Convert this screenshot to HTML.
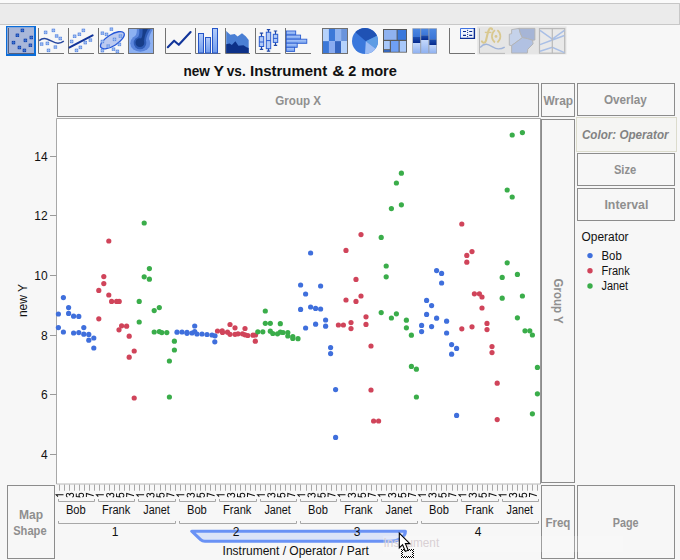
<!DOCTYPE html><html><head><meta charset="utf-8"><title>Graph Builder</title>
<style>html,body{margin:0;padding:0;background:#f7f7f7;overflow:hidden}svg{display:block}text{font-family:"Liberation Sans",sans-serif}</style></head><body>
<svg width="680" height="560" viewBox="0 0 680 560">
<rect width="680" height="560" fill="#f7f7f7"/>
<rect x="0" y="0" width="680" height="3" fill="#fafafa"/>
<rect x="0" y="3" width="680" height="21" fill="#ebebeb"/>
<rect x="0" y="3" width="680" height="1" fill="#c6c6c6"/>
<rect x="0" y="24" width="680" height="1" fill="#c8c8c8"/>
<rect x="679" y="3" width="1" height="22" fill="#c8c8c8"/>
<defs><linearGradient id="gb" x1="0" y1="0" x2="0" y2="1"><stop offset="0" stop-color="#b4cdfb"/><stop offset="1" stop-color="#6f9bec"/></linearGradient><linearGradient id="gh" x1="0" y1="0" x2="0" y2="1"><stop offset="0" stop-color="#b2ccfa"/><stop offset="1" stop-color="#74a0ee"/></linearGradient><linearGradient id="gl" x1="0" y1="0" x2="0" y2="1"><stop offset="0" stop-color="#c4d8fb"/><stop offset="1" stop-color="#8fb1f0"/></linearGradient><linearGradient id="gm" x1="0" y1="0" x2="0" y2="1"><stop offset="0" stop-color="#4c88e2"/><stop offset="1" stop-color="#3a74d6"/></linearGradient><linearGradient id="gd" x1="0" y1="0" x2="0" y2="1"><stop offset="0" stop-color="#1d4eae"/><stop offset="1" stop-color="#062a8e"/></linearGradient><clipPath id="cc"><rect x="128.5" y="28.5" width="25" height="25"/></clipPath><clipPath id="cp"><circle cx="365" cy="41" r="13"/></clipPath></defs>
<rect x="6" y="26" width="30" height="30" fill="#0b6dd9"/>
<rect x="7.2" y="27.2" width="26.8" height="26.8" fill="#a9b7d9"/>
<path d="M8.5 28 V53.5 H34" fill="none" stroke="#56607e" stroke-width="1"/>
<rect x="20.7" y="28.7" width="3.4" height="3.4" fill="#1445ac"/>
<path d="M20.7 30.4 H24.1 M22.4 28.7 V32.1" stroke="#4475d2" stroke-width="0.7"/>
<rect x="15.7" y="33.6" width="3.4" height="3.4" fill="#1445ac"/>
<path d="M15.7 35.3 H19.1 M17.4 33.6 V37.0" stroke="#4475d2" stroke-width="0.7"/>
<rect x="29.6" y="35.8" width="3.4" height="3.4" fill="#1445ac"/>
<path d="M29.6 37.5 H33.0 M31.3 35.8 V39.2" stroke="#4475d2" stroke-width="0.7"/>
<rect x="23.7" y="38.7" width="3.4" height="3.4" fill="#1445ac"/>
<path d="M23.7 40.4 H27.1 M25.4 38.7 V42.1" stroke="#4475d2" stroke-width="0.7"/>
<rect x="11.8" y="40.9" width="3.4" height="3.4" fill="#1445ac"/>
<path d="M11.8 42.6 H15.2 M13.5 40.9 V44.3" stroke="#4475d2" stroke-width="0.7"/>
<rect x="28.7" y="43.6" width="3.4" height="3.4" fill="#1445ac"/>
<path d="M28.7 45.3 H32.1 M30.4 43.6 V47.0" stroke="#4475d2" stroke-width="0.7"/>
<rect x="17.7" y="45.8" width="3.4" height="3.4" fill="#1445ac"/>
<path d="M17.7 47.5 H21.1 M19.4 45.8 V49.2" stroke="#4475d2" stroke-width="0.7"/>
<rect x="22.7" y="48.7" width="3.4" height="3.4" fill="#1445ac"/>
<path d="M22.7 50.4 H26.1 M24.4 48.7 V52.1" stroke="#4475d2" stroke-width="0.7"/>
<path d="M38.5 28.0 V53.5 H64.0" fill="none" stroke="#727272" stroke-width="1"/>
<rect x="43.9" y="30.7" width="3.4" height="3.4" fill="#648fe2"/>
<path d="M43.9 32.4 H47.3 M45.6 30.7 V34.1" stroke="#a4c0f4" stroke-width="0.7"/>
<rect x="51.7" y="28.7" width="3.4" height="3.4" fill="#648fe2"/>
<path d="M51.7 30.4 H55.1 M53.4 28.7 V32.1" stroke="#a4c0f4" stroke-width="0.7"/>
<rect x="54.9" y="34.3" width="3.4" height="3.4" fill="#648fe2"/>
<path d="M54.9 36.0 H58.3 M56.6 34.3 V37.7" stroke="#a4c0f4" stroke-width="0.7"/>
<rect x="58.6" y="36.8" width="3.4" height="3.4" fill="#648fe2"/>
<path d="M58.6 38.5 H62.0 M60.3 36.8 V40.2" stroke="#a4c0f4" stroke-width="0.7"/>
<rect x="39.9" y="42.4" width="3.4" height="3.4" fill="#648fe2"/>
<path d="M39.9 44.1 H43.3 M41.6 42.4 V45.8" stroke="#a4c0f4" stroke-width="0.7"/>
<rect x="45.7" y="41.7" width="3.4" height="3.4" fill="#648fe2"/>
<path d="M45.7 43.4 H49.1 M47.4 41.7 V45.1" stroke="#a4c0f4" stroke-width="0.7"/>
<rect x="53.7" y="45.4" width="3.4" height="3.4" fill="#648fe2"/>
<path d="M53.7 47.1 H57.1 M55.4 45.4 V48.8" stroke="#a4c0f4" stroke-width="0.7"/>
<rect x="46.8" y="48.7" width="3.4" height="3.4" fill="#648fe2"/>
<path d="M46.8 50.4 H50.2 M48.5 48.7 V52.1" stroke="#a4c0f4" stroke-width="0.7"/>
<path d="M39.2 40.6 C41.5 38.6 44.5 38 47.5 39.2 C51.5 40.8 54.5 43.2 58 43.2 C60.5 43.2 62.4 42.3 63.8 41.2" fill="none" stroke="#27479f" stroke-width="1.5"/>
<path d="M68.5 28.0 V53.5 H94.0" fill="none" stroke="#727272" stroke-width="1"/>
<rect x="81.7" y="28.7" width="3.4" height="3.4" fill="#648fe2"/>
<path d="M81.7 30.4 H85.1 M83.4 28.7 V32.1" stroke="#a4c0f4" stroke-width="0.7"/>
<rect x="77.7" y="32.6" width="3.4" height="3.4" fill="#648fe2"/>
<path d="M77.7 34.3 H81.1 M79.4 32.6 V36.0" stroke="#a4c0f4" stroke-width="0.7"/>
<rect x="72.9" y="34.6" width="3.4" height="3.4" fill="#648fe2"/>
<path d="M72.9 36.3 H76.3 M74.6 34.6 V38.0" stroke="#a4c0f4" stroke-width="0.7"/>
<rect x="69.9" y="39.8" width="3.4" height="3.4" fill="#648fe2"/>
<path d="M69.9 41.5 H73.3 M71.6 39.8 V43.2" stroke="#a4c0f4" stroke-width="0.7"/>
<rect x="88.7" y="38.4" width="3.4" height="3.4" fill="#648fe2"/>
<path d="M88.7 40.1 H92.1 M90.4 38.4 V41.8" stroke="#a4c0f4" stroke-width="0.7"/>
<rect x="83.6" y="40.9" width="3.4" height="3.4" fill="#648fe2"/>
<path d="M83.6 42.6 H87.0 M85.3 40.9 V44.3" stroke="#a4c0f4" stroke-width="0.7"/>
<rect x="78.7" y="45.7" width="3.4" height="3.4" fill="#648fe2"/>
<path d="M78.7 47.4 H82.1 M80.4 45.7 V49.1" stroke="#a4c0f4" stroke-width="0.7"/>
<rect x="74.8" y="48.7" width="3.4" height="3.4" fill="#648fe2"/>
<path d="M74.8 50.4 H78.2 M76.5 48.7 V52.1" stroke="#a4c0f4" stroke-width="0.7"/>
<path d="M69.6 47.4 L92.6 35.4" stroke="#12359a" stroke-width="2.1" stroke-linecap="round"/>
<path d="M98.5 28.0 V53.5 H124.0" fill="none" stroke="#727272" stroke-width="1"/>
<ellipse cx="112.4" cy="40.2" rx="13.6" ry="5.6" transform="rotate(-32 112.4 40.2)" fill="#bccaf0" stroke="#2557d8" stroke-width="1.3"/>
<rect x="109.7" y="27.5" width="3.4" height="3.4" fill="#648fe2"/>
<path d="M109.7 29.2 H113.1 M111.4 27.5 V30.9" stroke="#a4c0f4" stroke-width="0.7"/>
<rect x="100.7" y="31.5" width="3.4" height="3.4" fill="#648fe2"/>
<path d="M100.7 33.2 H104.1 M102.4 31.5 V34.9" stroke="#a4c0f4" stroke-width="0.7"/>
<rect x="104.8" y="32.7" width="3.4" height="3.4" fill="#648fe2"/>
<path d="M104.8 34.4 H108.2 M106.5 32.7 V36.1" stroke="#a4c0f4" stroke-width="0.7"/>
<rect x="118.7" y="34.4" width="3.4" height="3.4" fill="#648fe2"/>
<path d="M118.7 36.1 H122.1 M120.4 34.4 V37.8" stroke="#a4c0f4" stroke-width="0.7"/>
<rect x="112.8" y="37.7" width="3.4" height="3.4" fill="#648fe2"/>
<path d="M112.8 39.4 H116.2 M114.5 37.7 V41.1" stroke="#a4c0f4" stroke-width="0.7"/>
<rect x="100.7" y="39.8" width="3.4" height="3.4" fill="#648fe2"/>
<path d="M100.7 41.5 H104.1 M102.4 39.8 V43.2" stroke="#a4c0f4" stroke-width="0.7"/>
<rect x="117.7" y="42.7" width="3.4" height="3.4" fill="#648fe2"/>
<path d="M117.7 44.4 H121.1 M119.4 42.7 V46.1" stroke="#a4c0f4" stroke-width="0.7"/>
<rect x="106.5" y="44.4" width="3.4" height="3.4" fill="#648fe2"/>
<path d="M106.5 46.1 H109.9 M108.2 44.4 V47.8" stroke="#a4c0f4" stroke-width="0.7"/>
<rect x="111.8" y="47.5" width="3.4" height="3.4" fill="#648fe2"/>
<path d="M111.8 49.2 H115.2 M113.5 47.5 V50.9" stroke="#a4c0f4" stroke-width="0.7"/>
<rect x="100.7" y="48.9" width="3.4" height="3.4" fill="#648fe2"/>
<path d="M100.7 50.6 H104.1 M102.4 48.9 V52.3" stroke="#a4c0f4" stroke-width="0.7"/>
<rect x="115.7" y="49.7" width="3.4" height="3.4" fill="#648fe2"/>
<path d="M115.7 51.4 H119.1 M117.4 49.7 V53.1" stroke="#a4c0f4" stroke-width="0.7"/>
<rect x="128.5" y="28.5" width="25" height="25" fill="#8db1f2"/>
<g clip-path="url(#cc)">
<ellipse cx="140.3" cy="43.2" rx="10" ry="8.5" fill="#5a85dc"/><path d="M136.4 27 C137.6 32 136.4 35.5 133.6 38 L149 41 C148.4 37.5 150.6 33 154 27 Z" fill="#5a85dc"/>
<circle cx="140" cy="43" r="6.3" fill="#2f5cb6"/><path d="M138.8 27 C139.8 32.5 139.4 36 137 38.4 L146 41.5 C146 38 147.4 33.5 152 27 Z" fill="#2f5cb6"/>
<circle cx="139.9" cy="42.7" r="4.4" fill="#173d88"/><path d="M142.5 27 C142.7 33 142.6 36 141 38.8 L144.2 41.2 C144.3 38 145 33.5 149 27 Z" fill="#173d88"/>
</g>
<rect x="128.5" y="28.5" width="25" height="25" fill="none" stroke="#707070" stroke-width="1"/>
<path d="M165.5 28.0 V53.5 H191.0" fill="none" stroke="#727272" stroke-width="1"/>
<path d="M167.8 47.2 L174.1 40.7 L178.8 44.8 L190.6 32" fill="none" stroke="#12359a" stroke-width="2.1" stroke-linecap="round" stroke-linejoin="round"/>
<path d="M195.5 28.0 V53.5 H220.5" fill="none" stroke="#727272" stroke-width="1"/>
<rect x="198.5" y="33.5" width="5.0" height="19.5" fill="url(#gb)" stroke="#2555c8" stroke-width="1"/>
<rect x="205.5" y="37.5" width="5.0" height="15.5" fill="url(#gb)" stroke="#2555c8" stroke-width="1"/>
<rect x="212.5" y="28.5" width="5.0" height="24.5" fill="url(#gb)" stroke="#2555c8" stroke-width="1"/>
<path d="M225.5 28.0 V53.5 H250.0" fill="none" stroke="#727272" stroke-width="1"/>
<path d="M226.2 31 L230.3 34.7 L234.7 34 L237.6 36.5 L242 33.2 L245.7 36.2 L248.7 39.9 V53 H226.2 Z" fill="#4a7fd4"/>
<path d="M226.2 44.3 L229.6 43.5 L231.8 45 L235.4 41.3 L238.4 45.7 L243.5 45.3 L246.5 47.2 L248.7 47.9 V53 H226.2 Z" fill="#0d3188"/>
<path d="M255.5 28.0 V53.5 H280.5" fill="none" stroke="#727272" stroke-width="1"/>
<path d="M261.5 33.2 V49.4 M259.8 33.2 H263.2 M259.8 49.4 H263.2" stroke="#1d46a8" stroke-width="1.2" fill="none"/>
<rect x="259.3" y="36.6" width="4.4" height="9.9" fill="#b0caf8" stroke="#2a5cd0" stroke-width="1"/>
<path d="M259.3 42.0 H263.7" stroke="#2a5cd0" stroke-width="1"/>
<path d="M268.5 29.6 V51.2 M266.8 29.6 H270.2 M266.8 51.2 H270.2" stroke="#1d46a8" stroke-width="1.2" fill="none"/>
<rect x="266.3" y="32.2" width="4.4" height="16.5" fill="#b0caf8" stroke="#2a5cd0" stroke-width="1"/>
<path d="M266.3 40.6 H270.7" stroke="#2a5cd0" stroke-width="1"/>
<path d="M275.5 31.0 V45.3 M273.8 31.0 H277.2 M273.8 45.3 H277.2" stroke="#1d46a8" stroke-width="1.2" fill="none"/>
<rect x="273.3" y="34.3" width="4.4" height="8.1" fill="#b0caf8" stroke="#2a5cd0" stroke-width="1"/>
<path d="M273.3 38.4 H277.7" stroke="#2a5cd0" stroke-width="1"/>
<path d="M285.5 28.0 V53.5 H311.0" fill="none" stroke="#727272" stroke-width="1"/>
<rect x="286.3" y="31.0" width="9.4" height="4.1" fill="url(#gh)" stroke="#2a5cd0" stroke-width="0.9"/>
<rect x="286.3" y="35.1" width="14.3" height="4.1" fill="url(#gh)" stroke="#2a5cd0" stroke-width="0.9"/>
<rect x="286.3" y="39.2" width="20.5" height="4.1" fill="url(#gh)" stroke="#2a5cd0" stroke-width="0.9"/>
<rect x="286.3" y="43.2" width="10.9" height="4.1" fill="url(#gh)" stroke="#2a5cd0" stroke-width="0.9"/>
<rect x="286.3" y="47.3" width="8.3" height="4.1" fill="url(#gh)" stroke="#2a5cd0" stroke-width="0.9"/>
<rect x="322.8" y="28.7" width="6.2" height="12.6" fill="#b5d2fc"/>
<rect x="328.9" y="28.7" width="6.2" height="12.6" fill="#3b78d8"/>
<rect x="335.0" y="28.7" width="6.2" height="12.6" fill="#8fb3f0"/>
<rect x="341.1" y="28.7" width="6.2" height="12.6" fill="#6a94dc"/>
<rect x="322.8" y="41.1" width="6.2" height="12.6" fill="#3b78d8"/>
<rect x="328.9" y="41.1" width="6.2" height="12.6" fill="#8aacf0"/>
<rect x="335.0" y="41.1" width="6.2" height="12.6" fill="#3565c0"/>
<rect x="341.1" y="41.1" width="6.2" height="12.6" fill="#b5d2fc"/>
<rect x="322.5" y="28.5" width="25" height="25" fill="none" stroke="#707070" stroke-width="1"/>
<g clip-path="url(#cp)"><rect x="350" y="26" width="30" height="30" fill="#3a78dc"/><path d="M365.8 41.2 L351 28.4 L352 20 L385 20 L382.3 33.1 Z" fill="#1f52b4"/><path d="M365.8 41.2 L382.3 33.1 L386 45 L382.4 53.8 Z" fill="#5d9ce4"/><path d="M365.8 41.2 L382.4 53.8 L375 60 L364.6 60 Z" fill="#9cbdf5"/></g>
<rect x="383" y="29" width="24" height="23.6" fill="#595959"/>
<rect x="384.0" y="30.0" width="12.6" height="9.8" fill="#8fb2f0"/>
<rect x="397.6" y="30.0" width="8.5" height="9.8" fill="#3a78dc"/>
<rect x="384.0" y="41.0" width="5.8" height="8.2" fill="#a8c8fa"/>
<rect x="384.0" y="50.2" width="5.8" height="1.6" fill="#2f6bd6"/>
<rect x="390.9" y="41.0" width="7.7" height="10.8" fill="#6fa0f4"/>
<rect x="399.7" y="41.0" width="6.4" height="10.8" fill="#a8c8fa"/>
<rect x="412.3" y="28.3" width="24.7" height="25.4" fill="#9aa0aa"/>
<rect x="413.0" y="28.8" width="7.2" height="8.2" fill="url(#gm)"/>
<rect x="413.0" y="37.0" width="7.2" height="6.0" fill="url(#gd)"/>
<rect x="413.0" y="43.0" width="7.2" height="10.2" fill="url(#gl)"/>
<rect x="421.2" y="28.8" width="7.2" height="6.7" fill="url(#gm)"/>
<rect x="421.2" y="35.5" width="7.2" height="4.5" fill="url(#gd)"/>
<rect x="421.2" y="40.0" width="7.2" height="13.2" fill="url(#gl)"/>
<rect x="429.4" y="28.8" width="6.9" height="10.7" fill="url(#gm)"/>
<rect x="429.4" y="39.5" width="6.9" height="5.5" fill="url(#gd)"/>
<rect x="429.4" y="45.0" width="6.9" height="8.2" fill="url(#gl)"/>
<path d="M449.5 28.0 V53.5 H475.0" fill="none" stroke="#727272" stroke-width="1"/>
<rect x="460.5" y="28.5" width="14" height="10" fill="#eef3fd"/>
<path d="M460.5 39 V28.5 H475" fill="none" stroke="#3f72e2" stroke-width="1"/>
<path d="M460 38.4 H474.4 V28" fill="none" stroke="#0b2c92" stroke-width="1.4"/>
<path d="M463 31.5 H466 M469.2 31.5 H472.2 M463 35.4 H466 M469.2 35.4 H472.2" stroke="#0b2c92" stroke-width="1.2"/>
<circle cx="467.6" cy="30.3" r="0.6" fill="#0b2c92"/>
<circle cx="467.6" cy="32.5" r="0.6" fill="#0b2c92"/>
<circle cx="467.6" cy="34.5" r="0.6" fill="#0b2c92"/>
<circle cx="467.6" cy="36.6" r="0.6" fill="#0b2c92"/>
<rect x="477.2" y="26.4" width="89.3" height="28" fill="#e5e5e5"/>
<path d="M479.5 28.4 V53.4 H505" fill="none" stroke="#b8b8b8" stroke-width="1"/>
<path d="M492.2 29.3 C491.6 28 490.4 27.9 489.6 28.7 C488.4 29.9 488 32 487.4 34.6 L486 40.6 C485.6 42.2 484.6 42.9 483.6 42.7 C482.8 42.5 482.2 42 481.9 41.4" fill="none" stroke="#d9c88f" stroke-width="2.1" stroke-linecap="round"/>
<path d="M484.8 32.4 H491.4" stroke="#d9c88f" stroke-width="1.4"/>
<path d="M494.9 30.1 C490.9 33.5 490.9 39 494.9 42.5 M497.4 30.1 C501.4 33.5 501.4 39 497.4 42.5" fill="none" stroke="#d9c88f" stroke-width="1.7"/>
<circle cx="496" cy="36.4" r="1.4" fill="#d9c88f"/>
<path d="M480.1 47.4 C482 45.4 484 44.2 486.3 44.3 C490.5 44.5 494 48.9 498.3 48.9 C500.8 48.9 503 48.2 504.7 47.1" fill="none" stroke="#a1b4d9" stroke-width="1.4"/>
<path d="M511.6 29.6 L519.0 28.4 L520.3 33.2 L522.4 37.6 L511.6 45.6 L509.3 45.2 L509.3 34.2 L511.6 33.7 Z" fill="#c5d2ea" stroke="#b2b2b2" stroke-width="0.9" stroke-linejoin="round"/>
<path d="M519.0 28.4 L534.9 28.4 L534.9 40.0 L532.6 40.3 L527.3 38.6 L522.4 37.6 L520.3 33.2 Z" fill="#a6b5d6" stroke="#b2b2b2" stroke-width="0.9" stroke-linejoin="round"/>
<path d="M522.4 37.6 L527.3 38.6 L532.6 40.3 L533.1 43.9 L527.8 49.2 L527.3 53.1 L511.6 53.1 L511.6 45.6 Z" fill="#b1c1e2" stroke="#b2b2b2" stroke-width="0.9" stroke-linejoin="round"/>
<rect x="539.5" y="28.6" width="25.2" height="24.6" fill="#e9e9e9" stroke="#b9b9b9" stroke-width="1.2"/>
<path d="M540 30.3 L552.3 39 L564.4 30.3 M540 44.6 L552.3 40 L564.4 35.5 M540 51.2 L552.3 47.3 L564.4 52.6" fill="none" stroke="#a9bfe6" stroke-width="1.5"/>
<path d="M552.3 28.6 V53.2" stroke="#b9b9b9" stroke-width="1.2"/>
<text x="183.4" y="75.9" font-size="14.2" font-weight="bold" fill="#111" textLength="26.4" lengthAdjust="spacingAndGlyphs">new</text>
<text x="213.6" y="75.9" font-size="14.2" font-weight="bold" fill="#111" textLength="10.5" lengthAdjust="spacingAndGlyphs">Y</text>
<text x="226.7" y="75.9" font-size="14.2" font-weight="bold" fill="#111" textLength="19.0" lengthAdjust="spacingAndGlyphs">vs.</text>
<text x="250.0" y="75.9" font-size="14.2" font-weight="bold" fill="#111" textLength="77.2" lengthAdjust="spacingAndGlyphs">Instrument</text>
<text x="332.3" y="75.9" font-size="14.2" font-weight="bold" fill="#111" textLength="12.3" lengthAdjust="spacingAndGlyphs">&amp;</text>
<text x="348.2" y="75.9" font-size="14.2" font-weight="bold" fill="#111" textLength="8.0" lengthAdjust="spacingAndGlyphs">2</text>
<text x="361.2" y="75.9" font-size="14.2" font-weight="bold" fill="#111" textLength="35.7" lengthAdjust="spacingAndGlyphs">more</text>
<rect x="57.5" y="83.5" width="481.0" height="33.0" fill="none" stroke="#8c8c8c" stroke-width="1"/>
<text x="275.3" y="104.6" font-size="12.2" font-weight="bold" fill="#8f8f8f" textLength="45.8" lengthAdjust="spacingAndGlyphs" >Group X</text>
<rect x="541.5" y="83.5" width="33.0" height="33.0" fill="none" stroke="#8c8c8c" stroke-width="1"/>
<text x="543.4" y="104.6" font-size="12.2" font-weight="bold" fill="#8f8f8f" textLength="29.7" lengthAdjust="spacingAndGlyphs" >Wrap</text>
<rect x="577.5" y="83.5" width="97.0" height="32.0" fill="none" stroke="#8c8c8c" stroke-width="1"/>
<text x="603.9" y="104.0" font-size="12.2" font-weight="bold" fill="#8f8f8f" textLength="43.0" lengthAdjust="spacingAndGlyphs" >Overlay</text>
<rect x="576.5" y="117.5" width="100.0" height="34.0" fill="#f5f5f3" stroke="#dcdccd" stroke-width="1"/>
<text x="581.9" y="138.9" font-size="12.2" font-weight="bold" fill="#828282" textLength="86.7" lengthAdjust="spacingAndGlyphs" font-style="italic">Color: Operator</text>
<rect x="577.5" y="153.5" width="97.0" height="32.0" fill="none" stroke="#8c8c8c" stroke-width="1"/>
<text x="613.9" y="173.9" font-size="12.2" font-weight="bold" fill="#8f8f8f" textLength="22.4" lengthAdjust="spacingAndGlyphs" >Size</text>
<rect x="577.5" y="188.5" width="97.0" height="32.0" fill="none" stroke="#8c8c8c" stroke-width="1"/>
<text x="604.4" y="208.8" font-size="12.2" font-weight="bold" fill="#8f8f8f" textLength="44.0" lengthAdjust="spacingAndGlyphs" >Interval</text>
<rect x="541.5" y="119.5" width="33.0" height="363.0" fill="none" stroke="#8c8c8c" stroke-width="1"/>
<text transform="translate(553.6,278.6) rotate(90)" font-size="12.2" font-weight="bold" fill="#8f8f8f" textLength="45" lengthAdjust="spacingAndGlyphs">Group Y</text>
<rect x="7.5" y="485.5" width="47.0" height="73.0" fill="none" stroke="#8c8c8c" stroke-width="1"/>
<text x="19.0" y="518.6" font-size="12.2" font-weight="bold" fill="#8f8f8f" textLength="24.1" lengthAdjust="spacingAndGlyphs" >Map</text>
<text x="13.2" y="534.7" font-size="12.2" font-weight="bold" fill="#8f8f8f" textLength="33.4" lengthAdjust="spacingAndGlyphs" >Shape</text>
<rect x="541.5" y="485.5" width="33.0" height="73.0" fill="none" stroke="#8c8c8c" stroke-width="1"/>
<text x="545.4" y="527.0" font-size="12.2" font-weight="bold" fill="#8f8f8f" textLength="25.0" lengthAdjust="spacingAndGlyphs" >Freq</text>
<rect x="577.5" y="485.5" width="97.0" height="73.0" fill="none" stroke="#8c8c8c" stroke-width="1"/>
<text x="612.7" y="527.0" font-size="12.2" font-weight="bold" fill="#8f8f8f" textLength="25.8" lengthAdjust="spacingAndGlyphs" >Page</text>
<rect x="57" y="118.5" width="483.5" height="365.5" fill="#fff"/>
<path d="M56.5 484 V118.5 H540.5" fill="none" stroke="#a8a8a8" stroke-width="1"/>
<path d="M56.5 484 H540.5" fill="none" stroke="#b8b8b8" stroke-width="1"/>
<path d="M540.5 118.5 V484" fill="none" stroke="#9a9a9a" stroke-width="1"/>
<path d="M50 156.5 H56.5" stroke="#9a9a9a" stroke-width="1"/>
<text x="47.6" y="160.8" font-size="12" fill="#111" text-anchor="end">14</text>
<path d="M50 215.5 H56.5" stroke="#9a9a9a" stroke-width="1"/>
<text x="47.6" y="220.3" font-size="12" fill="#111" text-anchor="end">12</text>
<path d="M50 275.5 H56.5" stroke="#9a9a9a" stroke-width="1"/>
<text x="47.6" y="279.9" font-size="12" fill="#111" text-anchor="end">10</text>
<path d="M50 335.5 H56.5" stroke="#9a9a9a" stroke-width="1"/>
<text x="47.6" y="339.8" font-size="12" fill="#111" text-anchor="end">8</text>
<path d="M50 394.5 H56.5" stroke="#9a9a9a" stroke-width="1"/>
<text x="47.6" y="399.0" font-size="12" fill="#111" text-anchor="end">6</text>
<path d="M50 454.5 H56.5" stroke="#9a9a9a" stroke-width="1"/>
<text x="47.6" y="458.6" font-size="12" fill="#111" text-anchor="end">4</text>
<text transform="translate(26.6,300.5) rotate(-90)" font-size="12" fill="#111" text-anchor="middle">new Y</text>
<defs><g id="d1" fill="none" stroke="#111" stroke-width="1.05"><path d="M2.6 0 V-7.8 L0.7 -5.9"/></g><g id="d3" fill="none" stroke="#111" stroke-width="1.05"><path d="M0.4 -6.6 C0.9 -7.5 1.6 -7.8 2.2 -7.8 C3.3 -7.8 3.9 -7 3.9 -6 C3.9 -4.9 3.1 -4.2 1.8 -4.2 C3.3 -4.2 4.1 -3.4 4.1 -2.2 C4.1 -0.9 3.2 0 2.1 0 C1.3 0 0.6 -0.4 0.2 -1.2"/></g><g id="d5" fill="none" stroke="#111" stroke-width="1.05"><path d="M3.8 -7.8 H0.9 L0.6 -4.3 C1.1 -4.7 1.7 -4.9 2.3 -4.9 C3.4 -4.9 4.1 -3.9 4.1 -2.5 C4.1 -1 3.3 0 2.1 0 C1.3 0 0.6 -0.4 0.3 -1.2"/></g><g id="d7" fill="none" stroke="#111" stroke-width="1.05"><path d="M0.3 -7.8 H4 L1.6 0"/></g></defs>
<path d="M59.5 484.5 V490.7" stroke="#a8a8a8" stroke-width="1"/>
<use href="#d1" transform="translate(63.5,497.4) rotate(-90) scale(1,0.94)"/>
<path d="M64.5 484.5 V490.7" stroke="#a8a8a8" stroke-width="1"/>
<path d="M69.5 484.5 V490.7" stroke="#a8a8a8" stroke-width="1"/>
<use href="#d3" transform="translate(73.6,497.4) rotate(-90) scale(1,0.94)"/>
<path d="M74.5 484.5 V490.7" stroke="#a8a8a8" stroke-width="1"/>
<path d="M79.5 484.5 V490.7" stroke="#a8a8a8" stroke-width="1"/>
<use href="#d5" transform="translate(83.6,497.4) rotate(-90) scale(1,0.94)"/>
<path d="M84.5 484.5 V490.7" stroke="#a8a8a8" stroke-width="1"/>
<path d="M89.5 484.5 V490.7" stroke="#a8a8a8" stroke-width="1"/>
<use href="#d7" transform="translate(93.7,497.4) rotate(-90) scale(1,0.94)"/>
<path d="M94.5 484.5 V490.7" stroke="#a8a8a8" stroke-width="1"/>
<path d="M99.5 484.5 V490.7" stroke="#a8a8a8" stroke-width="1"/>
<use href="#d1" transform="translate(103.8,497.4) rotate(-90) scale(1,0.94)"/>
<path d="M104.5 484.5 V490.7" stroke="#a8a8a8" stroke-width="1"/>
<path d="M109.5 484.5 V490.7" stroke="#a8a8a8" stroke-width="1"/>
<use href="#d3" transform="translate(113.9,497.4) rotate(-90) scale(1,0.94)"/>
<path d="M114.5 484.5 V490.7" stroke="#a8a8a8" stroke-width="1"/>
<path d="M119.5 484.5 V490.7" stroke="#a8a8a8" stroke-width="1"/>
<use href="#d5" transform="translate(123.9,497.4) rotate(-90) scale(1,0.94)"/>
<path d="M124.5 484.5 V490.7" stroke="#a8a8a8" stroke-width="1"/>
<path d="M129.5 484.5 V490.7" stroke="#a8a8a8" stroke-width="1"/>
<use href="#d7" transform="translate(134.0,497.4) rotate(-90) scale(1,0.94)"/>
<path d="M134.5 484.5 V490.7" stroke="#a8a8a8" stroke-width="1"/>
<path d="M139.5 484.5 V490.7" stroke="#a8a8a8" stroke-width="1"/>
<use href="#d1" transform="translate(144.1,497.4) rotate(-90) scale(1,0.94)"/>
<path d="M144.5 484.5 V490.7" stroke="#a8a8a8" stroke-width="1"/>
<path d="M149.5 484.5 V490.7" stroke="#a8a8a8" stroke-width="1"/>
<use href="#d3" transform="translate(154.1,497.4) rotate(-90) scale(1,0.94)"/>
<path d="M154.5 484.5 V490.7" stroke="#a8a8a8" stroke-width="1"/>
<path d="M160.5 484.5 V490.7" stroke="#a8a8a8" stroke-width="1"/>
<use href="#d5" transform="translate(164.2,497.4) rotate(-90) scale(1,0.94)"/>
<path d="M165.5 484.5 V490.7" stroke="#a8a8a8" stroke-width="1"/>
<path d="M170.5 484.5 V490.7" stroke="#a8a8a8" stroke-width="1"/>
<use href="#d7" transform="translate(174.3,497.4) rotate(-90) scale(1,0.94)"/>
<path d="M175.5 484.5 V490.7" stroke="#a8a8a8" stroke-width="1"/>
<path d="M180.5 484.5 V490.7" stroke="#a8a8a8" stroke-width="1"/>
<use href="#d1" transform="translate(184.3,497.4) rotate(-90) scale(1,0.94)"/>
<path d="M185.5 484.5 V490.7" stroke="#a8a8a8" stroke-width="1"/>
<path d="M190.5 484.5 V490.7" stroke="#a8a8a8" stroke-width="1"/>
<use href="#d3" transform="translate(194.4,497.4) rotate(-90) scale(1,0.94)"/>
<path d="M195.5 484.5 V490.7" stroke="#a8a8a8" stroke-width="1"/>
<path d="M200.5 484.5 V490.7" stroke="#a8a8a8" stroke-width="1"/>
<use href="#d5" transform="translate(204.5,497.4) rotate(-90) scale(1,0.94)"/>
<path d="M205.5 484.5 V490.7" stroke="#a8a8a8" stroke-width="1"/>
<path d="M210.5 484.5 V490.7" stroke="#a8a8a8" stroke-width="1"/>
<use href="#d7" transform="translate(214.6,497.4) rotate(-90) scale(1,0.94)"/>
<path d="M215.5 484.5 V490.7" stroke="#a8a8a8" stroke-width="1"/>
<path d="M220.5 484.5 V490.7" stroke="#a8a8a8" stroke-width="1"/>
<use href="#d1" transform="translate(224.6,497.4) rotate(-90) scale(1,0.94)"/>
<path d="M225.5 484.5 V490.7" stroke="#a8a8a8" stroke-width="1"/>
<path d="M230.5 484.5 V490.7" stroke="#a8a8a8" stroke-width="1"/>
<use href="#d3" transform="translate(234.7,497.4) rotate(-90) scale(1,0.94)"/>
<path d="M235.5 484.5 V490.7" stroke="#a8a8a8" stroke-width="1"/>
<path d="M240.5 484.5 V490.7" stroke="#a8a8a8" stroke-width="1"/>
<use href="#d5" transform="translate(244.8,497.4) rotate(-90) scale(1,0.94)"/>
<path d="M245.5 484.5 V490.7" stroke="#a8a8a8" stroke-width="1"/>
<path d="M250.5 484.5 V490.7" stroke="#a8a8a8" stroke-width="1"/>
<use href="#d7" transform="translate(254.8,497.4) rotate(-90) scale(1,0.94)"/>
<path d="M255.5 484.5 V490.7" stroke="#a8a8a8" stroke-width="1"/>
<path d="M260.5 484.5 V490.7" stroke="#a8a8a8" stroke-width="1"/>
<use href="#d1" transform="translate(264.9,497.4) rotate(-90) scale(1,0.94)"/>
<path d="M265.5 484.5 V490.7" stroke="#a8a8a8" stroke-width="1"/>
<path d="M270.5 484.5 V490.7" stroke="#a8a8a8" stroke-width="1"/>
<use href="#d3" transform="translate(275.0,497.4) rotate(-90) scale(1,0.94)"/>
<path d="M275.5 484.5 V490.7" stroke="#a8a8a8" stroke-width="1"/>
<path d="M280.5 484.5 V490.7" stroke="#a8a8a8" stroke-width="1"/>
<use href="#d5" transform="translate(285.0,497.4) rotate(-90) scale(1,0.94)"/>
<path d="M285.5 484.5 V490.7" stroke="#a8a8a8" stroke-width="1"/>
<path d="M290.5 484.5 V490.7" stroke="#a8a8a8" stroke-width="1"/>
<use href="#d7" transform="translate(295.1,497.4) rotate(-90) scale(1,0.94)"/>
<path d="M295.5 484.5 V490.7" stroke="#a8a8a8" stroke-width="1"/>
<path d="M300.5 484.5 V490.7" stroke="#a8a8a8" stroke-width="1"/>
<use href="#d1" transform="translate(305.2,497.4) rotate(-90) scale(1,0.94)"/>
<path d="M306.5 484.5 V490.7" stroke="#a8a8a8" stroke-width="1"/>
<path d="M311.5 484.5 V490.7" stroke="#a8a8a8" stroke-width="1"/>
<use href="#d3" transform="translate(315.2,497.4) rotate(-90) scale(1,0.94)"/>
<path d="M316.5 484.5 V490.7" stroke="#a8a8a8" stroke-width="1"/>
<path d="M321.5 484.5 V490.7" stroke="#a8a8a8" stroke-width="1"/>
<use href="#d5" transform="translate(325.3,497.4) rotate(-90) scale(1,0.94)"/>
<path d="M326.5 484.5 V490.7" stroke="#a8a8a8" stroke-width="1"/>
<path d="M331.5 484.5 V490.7" stroke="#a8a8a8" stroke-width="1"/>
<use href="#d7" transform="translate(335.4,497.4) rotate(-90) scale(1,0.94)"/>
<path d="M336.5 484.5 V490.7" stroke="#a8a8a8" stroke-width="1"/>
<path d="M341.5 484.5 V490.7" stroke="#a8a8a8" stroke-width="1"/>
<use href="#d1" transform="translate(345.5,497.4) rotate(-90) scale(1,0.94)"/>
<path d="M346.5 484.5 V490.7" stroke="#a8a8a8" stroke-width="1"/>
<path d="M351.5 484.5 V490.7" stroke="#a8a8a8" stroke-width="1"/>
<use href="#d3" transform="translate(355.5,497.4) rotate(-90) scale(1,0.94)"/>
<path d="M356.5 484.5 V490.7" stroke="#a8a8a8" stroke-width="1"/>
<path d="M361.5 484.5 V490.7" stroke="#a8a8a8" stroke-width="1"/>
<use href="#d5" transform="translate(365.6,497.4) rotate(-90) scale(1,0.94)"/>
<path d="M366.5 484.5 V490.7" stroke="#a8a8a8" stroke-width="1"/>
<path d="M371.5 484.5 V490.7" stroke="#a8a8a8" stroke-width="1"/>
<use href="#d7" transform="translate(375.7,497.4) rotate(-90) scale(1,0.94)"/>
<path d="M376.5 484.5 V490.7" stroke="#a8a8a8" stroke-width="1"/>
<path d="M381.5 484.5 V490.7" stroke="#a8a8a8" stroke-width="1"/>
<use href="#d1" transform="translate(385.7,497.4) rotate(-90) scale(1,0.94)"/>
<path d="M386.5 484.5 V490.7" stroke="#a8a8a8" stroke-width="1"/>
<path d="M391.5 484.5 V490.7" stroke="#a8a8a8" stroke-width="1"/>
<use href="#d3" transform="translate(395.8,497.4) rotate(-90) scale(1,0.94)"/>
<path d="M396.5 484.5 V490.7" stroke="#a8a8a8" stroke-width="1"/>
<path d="M401.5 484.5 V490.7" stroke="#a8a8a8" stroke-width="1"/>
<use href="#d5" transform="translate(405.9,497.4) rotate(-90) scale(1,0.94)"/>
<path d="M406.5 484.5 V490.7" stroke="#a8a8a8" stroke-width="1"/>
<path d="M411.5 484.5 V490.7" stroke="#a8a8a8" stroke-width="1"/>
<use href="#d7" transform="translate(415.9,497.4) rotate(-90) scale(1,0.94)"/>
<path d="M416.5 484.5 V490.7" stroke="#a8a8a8" stroke-width="1"/>
<path d="M421.5 484.5 V490.7" stroke="#a8a8a8" stroke-width="1"/>
<use href="#d1" transform="translate(426.0,497.4) rotate(-90) scale(1,0.94)"/>
<path d="M426.5 484.5 V490.7" stroke="#a8a8a8" stroke-width="1"/>
<path d="M431.5 484.5 V490.7" stroke="#a8a8a8" stroke-width="1"/>
<use href="#d3" transform="translate(436.1,497.4) rotate(-90) scale(1,0.94)"/>
<path d="M436.5 484.5 V490.7" stroke="#a8a8a8" stroke-width="1"/>
<path d="M441.5 484.5 V490.7" stroke="#a8a8a8" stroke-width="1"/>
<use href="#d5" transform="translate(446.2,497.4) rotate(-90) scale(1,0.94)"/>
<path d="M446.5 484.5 V490.7" stroke="#a8a8a8" stroke-width="1"/>
<path d="M452.5 484.5 V490.7" stroke="#a8a8a8" stroke-width="1"/>
<use href="#d7" transform="translate(456.2,497.4) rotate(-90) scale(1,0.94)"/>
<path d="M457.5 484.5 V490.7" stroke="#a8a8a8" stroke-width="1"/>
<path d="M462.5 484.5 V490.7" stroke="#a8a8a8" stroke-width="1"/>
<use href="#d1" transform="translate(466.3,497.4) rotate(-90) scale(1,0.94)"/>
<path d="M467.5 484.5 V490.7" stroke="#a8a8a8" stroke-width="1"/>
<path d="M472.5 484.5 V490.7" stroke="#a8a8a8" stroke-width="1"/>
<use href="#d3" transform="translate(476.4,497.4) rotate(-90) scale(1,0.94)"/>
<path d="M477.5 484.5 V490.7" stroke="#a8a8a8" stroke-width="1"/>
<path d="M482.5 484.5 V490.7" stroke="#a8a8a8" stroke-width="1"/>
<use href="#d5" transform="translate(486.4,497.4) rotate(-90) scale(1,0.94)"/>
<path d="M487.5 484.5 V490.7" stroke="#a8a8a8" stroke-width="1"/>
<path d="M492.5 484.5 V490.7" stroke="#a8a8a8" stroke-width="1"/>
<use href="#d7" transform="translate(496.5,497.4) rotate(-90) scale(1,0.94)"/>
<path d="M497.5 484.5 V490.7" stroke="#a8a8a8" stroke-width="1"/>
<path d="M502.5 484.5 V490.7" stroke="#a8a8a8" stroke-width="1"/>
<use href="#d1" transform="translate(506.6,497.4) rotate(-90) scale(1,0.94)"/>
<path d="M507.5 484.5 V490.7" stroke="#a8a8a8" stroke-width="1"/>
<path d="M512.5 484.5 V490.7" stroke="#a8a8a8" stroke-width="1"/>
<use href="#d3" transform="translate(516.7,497.4) rotate(-90) scale(1,0.94)"/>
<path d="M517.5 484.5 V490.7" stroke="#a8a8a8" stroke-width="1"/>
<path d="M522.5 484.5 V490.7" stroke="#a8a8a8" stroke-width="1"/>
<use href="#d5" transform="translate(526.7,497.4) rotate(-90) scale(1,0.94)"/>
<path d="M527.5 484.5 V490.7" stroke="#a8a8a8" stroke-width="1"/>
<path d="M532.5 484.5 V490.7" stroke="#a8a8a8" stroke-width="1"/>
<use href="#d7" transform="translate(536.8,497.4) rotate(-90) scale(1,0.94)"/>
<path d="M537.5 484.5 V490.7" stroke="#a8a8a8" stroke-width="1"/>
<path d="M58.5 499 V501.5 H94.5 V499" fill="none" stroke="#a8a8a8" stroke-width="1"/>
<text x="65.9" y="513.8" font-size="12" fill="#111" textLength="19.8" lengthAdjust="spacingAndGlyphs">Bob</text>
<path d="M98.5 499 V501.5 H134.5 V499" fill="none" stroke="#a8a8a8" stroke-width="1"/>
<text x="102.0" y="513.8" font-size="12" fill="#111" textLength="28.3" lengthAdjust="spacingAndGlyphs">Frank</text>
<path d="M138.5 499 V501.5 H175.5 V499" fill="none" stroke="#a8a8a8" stroke-width="1"/>
<text x="143.3" y="513.8" font-size="12" fill="#111" textLength="26.4" lengthAdjust="spacingAndGlyphs">Janet</text>
<path d="M179.5 499 V501.5 H215.5 V499" fill="none" stroke="#a8a8a8" stroke-width="1"/>
<text x="187.0" y="513.8" font-size="12" fill="#111" textLength="19.8" lengthAdjust="spacingAndGlyphs">Bob</text>
<path d="M219.5 499 V501.5 H256.5 V499" fill="none" stroke="#a8a8a8" stroke-width="1"/>
<text x="223.1" y="513.8" font-size="12" fill="#111" textLength="28.3" lengthAdjust="spacingAndGlyphs">Frank</text>
<path d="M260.5 499 V501.5 H296.5 V499" fill="none" stroke="#a8a8a8" stroke-width="1"/>
<text x="264.4" y="513.8" font-size="12" fill="#111" textLength="26.4" lengthAdjust="spacingAndGlyphs">Janet</text>
<path d="M300.5 499 V501.5 H336.5 V499" fill="none" stroke="#a8a8a8" stroke-width="1"/>
<text x="308.1" y="513.8" font-size="12" fill="#111" textLength="19.8" lengthAdjust="spacingAndGlyphs">Bob</text>
<path d="M340.5 499 V501.5 H377.5 V499" fill="none" stroke="#a8a8a8" stroke-width="1"/>
<text x="344.2" y="513.8" font-size="12" fill="#111" textLength="28.3" lengthAdjust="spacingAndGlyphs">Frank</text>
<path d="M381.5 499 V501.5 H417.5 V499" fill="none" stroke="#a8a8a8" stroke-width="1"/>
<text x="385.5" y="513.8" font-size="12" fill="#111" textLength="26.4" lengthAdjust="spacingAndGlyphs">Janet</text>
<path d="M421.5 499 V501.5 H457.5 V499" fill="none" stroke="#a8a8a8" stroke-width="1"/>
<text x="429.1" y="513.8" font-size="12" fill="#111" textLength="19.8" lengthAdjust="spacingAndGlyphs">Bob</text>
<path d="M461.5 499 V501.5 H498.5 V499" fill="none" stroke="#a8a8a8" stroke-width="1"/>
<text x="465.2" y="513.8" font-size="12" fill="#111" textLength="28.3" lengthAdjust="spacingAndGlyphs">Frank</text>
<path d="M502.5 499 V501.5 H538.5 V499" fill="none" stroke="#a8a8a8" stroke-width="1"/>
<text x="506.6" y="513.8" font-size="12" fill="#111" textLength="26.4" lengthAdjust="spacingAndGlyphs">Janet</text>
<path d="M58.5 521 V523.5 H175.5 V521" fill="none" stroke="#a8a8a8" stroke-width="1"/>
<path d="M179.5 521 V523.5 H296.5 V521" fill="none" stroke="#a8a8a8" stroke-width="1"/>
<path d="M300.5 521 V523.5 H417.5 V521" fill="none" stroke="#a8a8a8" stroke-width="1"/>
<path d="M421.5 521 V523.5 H538.5 V521" fill="none" stroke="#a8a8a8" stroke-width="1"/>
<path d="M191.7 531.2 L200.6 539.6 Q202.4 541.3 204.8 541.3 L390.4 541.3 A15 10.1 0 0 0 405.4 531.2 Z" fill="#dce4f8" stroke="#6a92f5" stroke-width="3.1" stroke-linejoin="round" stroke-linecap="round"/>
<text x="115.0" y="535.8" font-size="12" fill="#111" text-anchor="middle">1</text>
<text x="236.0" y="535.8" font-size="12" fill="#111" text-anchor="middle">2</text>
<text x="357.1" y="535.8" font-size="12" fill="#111" text-anchor="middle">3</text>
<text x="478.2" y="535.8" font-size="12" fill="#111" text-anchor="middle">4</text>
<text x="222.6" y="554.6" font-size="12" fill="#111" textLength="146.2" lengthAdjust="spacingAndGlyphs">Instrument / Operator / Part</text>
<circle cx="58.4" cy="314.0" r="2.6" fill="#3f6fdc"/>
<circle cx="58.4" cy="327.6" r="2.6" fill="#3f6fdc"/>
<circle cx="63.4" cy="297.6" r="2.6" fill="#3f6fdc"/>
<circle cx="63.4" cy="332.0" r="2.6" fill="#3f6fdc"/>
<circle cx="68.6" cy="307.6" r="2.6" fill="#3f6fdc"/>
<circle cx="68.6" cy="313.4" r="2.6" fill="#3f6fdc"/>
<circle cx="73.6" cy="316.2" r="2.6" fill="#3f6fdc"/>
<circle cx="73.6" cy="333.0" r="2.6" fill="#3f6fdc"/>
<circle cx="78.8" cy="316.4" r="2.6" fill="#3f6fdc"/>
<circle cx="78.8" cy="332.6" r="2.6" fill="#3f6fdc"/>
<circle cx="83.8" cy="327.6" r="2.6" fill="#3f6fdc"/>
<circle cx="83.8" cy="334.2" r="2.6" fill="#3f6fdc"/>
<circle cx="88.8" cy="334.4" r="2.6" fill="#3f6fdc"/>
<circle cx="88.8" cy="340.2" r="2.6" fill="#3f6fdc"/>
<circle cx="93.8" cy="338.0" r="2.6" fill="#3f6fdc"/>
<circle cx="93.8" cy="348.0" r="2.6" fill="#3f6fdc"/>
<circle cx="177.0" cy="332.2" r="2.6" fill="#3f6fdc"/>
<circle cx="182.0" cy="332.0" r="2.6" fill="#3f6fdc"/>
<circle cx="187.0" cy="332.3" r="2.6" fill="#3f6fdc"/>
<circle cx="187.0" cy="333.3" r="2.6" fill="#3f6fdc"/>
<circle cx="192.0" cy="333.0" r="2.6" fill="#3f6fdc"/>
<circle cx="194.7" cy="326.0" r="2.6" fill="#3f6fdc"/>
<circle cx="194.7" cy="331.5" r="2.6" fill="#3f6fdc"/>
<circle cx="197.0" cy="334.0" r="2.6" fill="#3f6fdc"/>
<circle cx="202.0" cy="334.0" r="2.6" fill="#3f6fdc"/>
<circle cx="207.0" cy="334.5" r="2.6" fill="#3f6fdc"/>
<circle cx="212.0" cy="335.0" r="2.6" fill="#3f6fdc"/>
<circle cx="215.0" cy="335.8" r="2.6" fill="#3f6fdc"/>
<circle cx="214.8" cy="341.8" r="2.6" fill="#3f6fdc"/>
<circle cx="300.6" cy="285.0" r="2.6" fill="#3f6fdc"/>
<circle cx="300.6" cy="309.4" r="2.6" fill="#3f6fdc"/>
<circle cx="305.6" cy="294.0" r="2.6" fill="#3f6fdc"/>
<circle cx="305.6" cy="328.0" r="2.6" fill="#3f6fdc"/>
<circle cx="310.6" cy="253.0" r="2.6" fill="#3f6fdc"/>
<circle cx="310.6" cy="307.0" r="2.6" fill="#3f6fdc"/>
<circle cx="315.6" cy="308.4" r="2.6" fill="#3f6fdc"/>
<circle cx="315.6" cy="324.2" r="2.6" fill="#3f6fdc"/>
<circle cx="320.6" cy="286.0" r="2.6" fill="#3f6fdc"/>
<circle cx="320.6" cy="309.0" r="2.6" fill="#3f6fdc"/>
<circle cx="325.6" cy="320.0" r="2.6" fill="#3f6fdc"/>
<circle cx="325.6" cy="326.2" r="2.6" fill="#3f6fdc"/>
<circle cx="330.6" cy="347.6" r="2.6" fill="#3f6fdc"/>
<circle cx="330.6" cy="353.6" r="2.6" fill="#3f6fdc"/>
<circle cx="335.6" cy="389.6" r="2.6" fill="#3f6fdc"/>
<circle cx="335.6" cy="437.4" r="2.6" fill="#3f6fdc"/>
<circle cx="421.6" cy="325.4" r="2.6" fill="#3f6fdc"/>
<circle cx="421.6" cy="331.6" r="2.6" fill="#3f6fdc"/>
<circle cx="426.6" cy="300.4" r="2.6" fill="#3f6fdc"/>
<circle cx="426.6" cy="314.4" r="2.6" fill="#3f6fdc"/>
<circle cx="431.6" cy="305.6" r="2.6" fill="#3f6fdc"/>
<circle cx="431.6" cy="326.6" r="2.6" fill="#3f6fdc"/>
<circle cx="436.6" cy="270.6" r="2.6" fill="#3f6fdc"/>
<circle cx="436.6" cy="318.2" r="2.6" fill="#3f6fdc"/>
<circle cx="441.6" cy="273.4" r="2.6" fill="#3f6fdc"/>
<circle cx="441.6" cy="283.0" r="2.6" fill="#3f6fdc"/>
<circle cx="446.6" cy="321.2" r="2.6" fill="#3f6fdc"/>
<circle cx="446.6" cy="333.0" r="2.6" fill="#3f6fdc"/>
<circle cx="451.6" cy="344.6" r="2.6" fill="#3f6fdc"/>
<circle cx="451.6" cy="354.2" r="2.6" fill="#3f6fdc"/>
<circle cx="456.6" cy="348.4" r="2.6" fill="#3f6fdc"/>
<circle cx="456.6" cy="415.4" r="2.6" fill="#3f6fdc"/>
<circle cx="98.8" cy="290.4" r="2.6" fill="#d0445a"/>
<circle cx="98.8" cy="318.8" r="2.6" fill="#d0445a"/>
<circle cx="103.8" cy="276.6" r="2.6" fill="#d0445a"/>
<circle cx="103.8" cy="283.6" r="2.6" fill="#d0445a"/>
<circle cx="108.8" cy="241.0" r="2.6" fill="#d0445a"/>
<circle cx="108.8" cy="295.0" r="2.6" fill="#d0445a"/>
<circle cx="111.6" cy="301.4" r="2.6" fill="#d0445a"/>
<circle cx="116.6" cy="301.4" r="2.6" fill="#d0445a"/>
<circle cx="119.2" cy="301.4" r="2.6" fill="#d0445a"/>
<circle cx="121.6" cy="325.8" r="2.6" fill="#d0445a"/>
<circle cx="126.6" cy="326.2" r="2.6" fill="#d0445a"/>
<circle cx="119.0" cy="329.8" r="2.6" fill="#d0445a"/>
<circle cx="129.2" cy="336.2" r="2.6" fill="#d0445a"/>
<circle cx="129.2" cy="357.2" r="2.6" fill="#d0445a"/>
<circle cx="134.2" cy="351.0" r="2.6" fill="#d0445a"/>
<circle cx="134.2" cy="398.0" r="2.6" fill="#d0445a"/>
<circle cx="217.5" cy="331.0" r="2.6" fill="#d0445a"/>
<circle cx="222.2" cy="330.8" r="2.6" fill="#d0445a"/>
<circle cx="222.5" cy="332.5" r="2.6" fill="#d0445a"/>
<circle cx="227.5" cy="332.2" r="2.6" fill="#d0445a"/>
<circle cx="230.0" cy="324.5" r="2.6" fill="#d0445a"/>
<circle cx="230.0" cy="334.3" r="2.6" fill="#d0445a"/>
<circle cx="235.0" cy="327.8" r="2.6" fill="#d0445a"/>
<circle cx="235.0" cy="334.3" r="2.6" fill="#d0445a"/>
<circle cx="238.0" cy="333.8" r="2.6" fill="#d0445a"/>
<circle cx="242.5" cy="333.8" r="2.6" fill="#d0445a"/>
<circle cx="245.0" cy="328.5" r="2.6" fill="#d0445a"/>
<circle cx="245.0" cy="334.8" r="2.6" fill="#d0445a"/>
<circle cx="247.8" cy="335.5" r="2.6" fill="#d0445a"/>
<circle cx="253.0" cy="335.2" r="2.6" fill="#d0445a"/>
<circle cx="255.5" cy="335.0" r="2.6" fill="#d0445a"/>
<circle cx="255.3" cy="341.2" r="2.6" fill="#d0445a"/>
<circle cx="338.4" cy="325.0" r="2.6" fill="#d0445a"/>
<circle cx="343.4" cy="325.0" r="2.6" fill="#d0445a"/>
<circle cx="346.0" cy="250.4" r="2.6" fill="#d0445a"/>
<circle cx="346.0" cy="300.0" r="2.6" fill="#d0445a"/>
<circle cx="351.0" cy="322.6" r="2.6" fill="#d0445a"/>
<circle cx="351.0" cy="328.6" r="2.6" fill="#d0445a"/>
<circle cx="356.0" cy="279.4" r="2.6" fill="#d0445a"/>
<circle cx="356.0" cy="301.4" r="2.6" fill="#d0445a"/>
<circle cx="361.0" cy="234.6" r="2.6" fill="#d0445a"/>
<circle cx="361.0" cy="296.0" r="2.6" fill="#d0445a"/>
<circle cx="366.0" cy="316.8" r="2.6" fill="#d0445a"/>
<circle cx="366.0" cy="324.4" r="2.6" fill="#d0445a"/>
<circle cx="371.0" cy="346.0" r="2.6" fill="#d0445a"/>
<circle cx="371.0" cy="390.0" r="2.6" fill="#d0445a"/>
<circle cx="373.6" cy="421.0" r="2.6" fill="#d0445a"/>
<circle cx="378.6" cy="421.0" r="2.6" fill="#d0445a"/>
<circle cx="461.8" cy="328.8" r="2.6" fill="#d0445a"/>
<circle cx="461.8" cy="224.0" r="2.6" fill="#d0445a"/>
<circle cx="466.8" cy="255.4" r="2.6" fill="#d0445a"/>
<circle cx="466.8" cy="262.2" r="2.6" fill="#d0445a"/>
<circle cx="472.0" cy="251.6" r="2.6" fill="#d0445a"/>
<circle cx="472.0" cy="326.8" r="2.6" fill="#d0445a"/>
<circle cx="474.4" cy="293.8" r="2.6" fill="#d0445a"/>
<circle cx="479.4" cy="293.8" r="2.6" fill="#d0445a"/>
<circle cx="482.0" cy="297.0" r="2.6" fill="#d0445a"/>
<circle cx="482.0" cy="308.0" r="2.6" fill="#d0445a"/>
<circle cx="487.0" cy="323.4" r="2.6" fill="#d0445a"/>
<circle cx="487.0" cy="329.6" r="2.6" fill="#d0445a"/>
<circle cx="492.0" cy="346.6" r="2.6" fill="#d0445a"/>
<circle cx="492.0" cy="352.6" r="2.6" fill="#d0445a"/>
<circle cx="497.2" cy="383.2" r="2.6" fill="#d0445a"/>
<circle cx="497.2" cy="419.6" r="2.6" fill="#d0445a"/>
<circle cx="139.2" cy="301.4" r="2.6" fill="#3aad4a"/>
<circle cx="139.2" cy="322.0" r="2.6" fill="#3aad4a"/>
<circle cx="144.2" cy="223.0" r="2.6" fill="#3aad4a"/>
<circle cx="144.2" cy="276.8" r="2.6" fill="#3aad4a"/>
<circle cx="149.4" cy="268.6" r="2.6" fill="#3aad4a"/>
<circle cx="149.4" cy="279.2" r="2.6" fill="#3aad4a"/>
<circle cx="154.2" cy="310.6" r="2.6" fill="#3aad4a"/>
<circle cx="154.2" cy="332.0" r="2.6" fill="#3aad4a"/>
<circle cx="159.3" cy="307.6" r="2.6" fill="#3aad4a"/>
<circle cx="159.3" cy="331.6" r="2.6" fill="#3aad4a"/>
<circle cx="161.8" cy="332.6" r="2.6" fill="#3aad4a"/>
<circle cx="166.8" cy="332.6" r="2.6" fill="#3aad4a"/>
<circle cx="169.4" cy="361.0" r="2.6" fill="#3aad4a"/>
<circle cx="169.4" cy="397.0" r="2.6" fill="#3aad4a"/>
<circle cx="174.4" cy="341.2" r="2.6" fill="#3aad4a"/>
<circle cx="174.4" cy="350.0" r="2.6" fill="#3aad4a"/>
<circle cx="257.8" cy="331.8" r="2.6" fill="#3aad4a"/>
<circle cx="262.8" cy="331.8" r="2.6" fill="#3aad4a"/>
<circle cx="265.3" cy="311.0" r="2.6" fill="#3aad4a"/>
<circle cx="265.3" cy="323.3" r="2.6" fill="#3aad4a"/>
<circle cx="270.3" cy="323.3" r="2.6" fill="#3aad4a"/>
<circle cx="270.3" cy="331.2" r="2.6" fill="#3aad4a"/>
<circle cx="272.8" cy="333.5" r="2.6" fill="#3aad4a"/>
<circle cx="277.5" cy="333.8" r="2.6" fill="#3aad4a"/>
<circle cx="280.3" cy="323.7" r="2.6" fill="#3aad4a"/>
<circle cx="280.3" cy="332.2" r="2.6" fill="#3aad4a"/>
<circle cx="283.0" cy="332.5" r="2.6" fill="#3aad4a"/>
<circle cx="287.8" cy="332.5" r="2.6" fill="#3aad4a"/>
<circle cx="287.8" cy="336.0" r="2.6" fill="#3aad4a"/>
<circle cx="292.8" cy="336.5" r="2.6" fill="#3aad4a"/>
<circle cx="292.8" cy="338.5" r="2.6" fill="#3aad4a"/>
<circle cx="298.0" cy="338.7" r="2.6" fill="#3aad4a"/>
<circle cx="381.2" cy="237.4" r="2.6" fill="#3aad4a"/>
<circle cx="381.2" cy="312.6" r="2.6" fill="#3aad4a"/>
<circle cx="386.2" cy="266.0" r="2.6" fill="#3aad4a"/>
<circle cx="386.2" cy="276.8" r="2.6" fill="#3aad4a"/>
<circle cx="391.4" cy="318.0" r="2.6" fill="#3aad4a"/>
<circle cx="391.4" cy="208.6" r="2.6" fill="#3aad4a"/>
<circle cx="396.4" cy="313.8" r="2.6" fill="#3aad4a"/>
<circle cx="396.4" cy="183.0" r="2.6" fill="#3aad4a"/>
<circle cx="401.4" cy="173.2" r="2.6" fill="#3aad4a"/>
<circle cx="401.4" cy="204.8" r="2.6" fill="#3aad4a"/>
<circle cx="406.4" cy="320.2" r="2.6" fill="#3aad4a"/>
<circle cx="406.4" cy="327.8" r="2.6" fill="#3aad4a"/>
<circle cx="411.4" cy="335.2" r="2.6" fill="#3aad4a"/>
<circle cx="411.4" cy="366.4" r="2.6" fill="#3aad4a"/>
<circle cx="416.4" cy="369.2" r="2.6" fill="#3aad4a"/>
<circle cx="416.4" cy="397.0" r="2.6" fill="#3aad4a"/>
<circle cx="502.2" cy="277.4" r="2.6" fill="#3aad4a"/>
<circle cx="502.2" cy="298.2" r="2.6" fill="#3aad4a"/>
<circle cx="507.2" cy="262.8" r="2.6" fill="#3aad4a"/>
<circle cx="507.2" cy="190.0" r="2.6" fill="#3aad4a"/>
<circle cx="512.2" cy="135.0" r="2.6" fill="#3aad4a"/>
<circle cx="512.2" cy="197.0" r="2.6" fill="#3aad4a"/>
<circle cx="517.4" cy="274.4" r="2.6" fill="#3aad4a"/>
<circle cx="517.4" cy="317.8" r="2.6" fill="#3aad4a"/>
<circle cx="522.4" cy="296.0" r="2.6" fill="#3aad4a"/>
<circle cx="522.4" cy="132.6" r="2.6" fill="#3aad4a"/>
<circle cx="525.0" cy="330.8" r="2.6" fill="#3aad4a"/>
<circle cx="529.8" cy="330.8" r="2.6" fill="#3aad4a"/>
<circle cx="532.4" cy="335.0" r="2.6" fill="#3aad4a"/>
<circle cx="532.4" cy="413.8" r="2.6" fill="#3aad4a"/>
<circle cx="537.4" cy="367.4" r="2.6" fill="#3aad4a"/>
<circle cx="537.4" cy="393.8" r="2.6" fill="#3aad4a"/>
<text x="581.6" y="241.2" font-size="12" fill="#111" textLength="47" lengthAdjust="spacingAndGlyphs">Operator</text>
<circle cx="590" cy="255.6" r="2.7" fill="#3f6fdc"/>
<text x="601.5" y="259.5" font-size="12" fill="#111" textLength="20.2" lengthAdjust="spacingAndGlyphs">Bob</text>
<circle cx="590" cy="270.8" r="2.7" fill="#d0445a"/>
<text x="601.5" y="274.7" font-size="12" fill="#111" textLength="28.3" lengthAdjust="spacingAndGlyphs">Frank</text>
<circle cx="590" cy="286.0" r="2.7" fill="#3aad4a"/>
<text x="601.5" y="289.9" font-size="12" fill="#111" textLength="26.6" lengthAdjust="spacingAndGlyphs">Janet</text>
<rect x="383" y="536" width="240" height="16" fill="#fff" opacity="0.17"/>
<text x="383.6" y="546.8" font-size="12" fill="#d9d0d4" textLength="55.6" lengthAdjust="spacingAndGlyphs">Instrument</text>
<g><rect x="401" y="549" width="13" height="9" fill="#fff"/><rect x="403" y="551" width="9" height="5" fill="#f1f1f1"/><path d="M401 549h1v1h-1zM403 549h1v1h-1zM405 549h1v1h-1zM407 549h1v1h-1zM409 549h1v1h-1zM411 549h1v1h-1zM413 549h1v1h-1zM402 550h1v1h-1zM404 550h1v1h-1zM406 550h1v1h-1zM408 550h1v1h-1zM410 550h1v1h-1zM412 550h1v1h-1zM401 551h1v1h-1zM413 551h1v1h-1zM402 552h1v1h-1zM412 552h1v1h-1zM401 553h1v1h-1zM413 553h1v1h-1zM402 554h1v1h-1zM412 554h1v1h-1zM401 555h1v1h-1zM413 555h1v1h-1zM402 556h1v1h-1zM404 556h1v1h-1zM406 556h1v1h-1zM408 556h1v1h-1zM410 556h1v1h-1zM412 556h1v1h-1zM401 557h1v1h-1zM403 557h1v1h-1zM405 557h1v1h-1zM407 557h1v1h-1zM409 557h1v1h-1zM411 557h1v1h-1zM413 557h1v1h-1z" fill="#000" shape-rendering="crispEdges"/><path transform="translate(399.3,533)" d="M0 0 V14.9 L3.3 11.7 L6.1 18.4 L8.9 17.3 L6.1 10.6 H10.5 Z" fill="#fff" stroke="#000" stroke-width="1.1" stroke-linejoin="miter"/></g>
</svg></body></html>
